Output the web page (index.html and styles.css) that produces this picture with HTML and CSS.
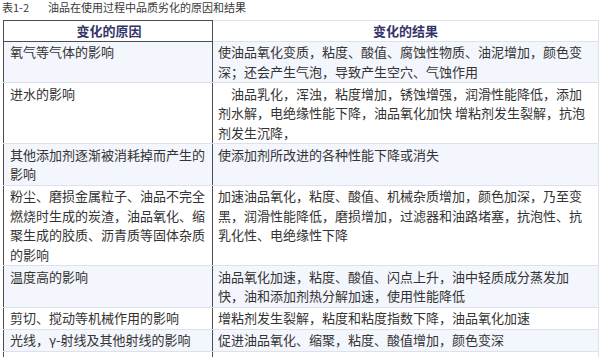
FILE: index.html
```html
<!DOCTYPE html>
<html lang="zh">
<head>
<meta charset="utf-8">
<link rel="stylesheet" href="styles.css">
</head>
<body>
<div class="caption"><span class="num">表1-2</span><span>油品在使用过程中品质劣化的原因和结果</span></div>
<table class="grid">
  <colgroup><col class="c1"><col class="c2"></colgroup>
  <thead>
    <tr><th class="cause">变化的原因</th><th class="result">变化的结果</th></tr>
  </thead>
  <tbody>
    <tr class="alt"><td class="cause">氧气等气体的影响</td><td>使油品氧化变质，粘度、酸值、腐蚀性物质、油泥增加，颜色变深；还会产生气泡，导致产生空穴、气蚀作用</td></tr>
    <tr><td class="cause">进水的影响</td><td class="indent">油品乳化，浑浊，粘度增加，锈蚀增强，润滑性能降低，添加剂水解，电绝缘性能下降，油品氧化加快 增粘剂发生裂解，抗泡剂发生沉降，</td></tr>
    <tr class="alt"><td class="cause">其他添加剂逐渐被消耗掉而产生的影响</td><td>使添加剂所改进的各种性能下降或消失</td></tr>
    <tr><td class="cause">粉尘、磨损金属粒子、油品不完全燃烧时生成的炭渣，油品氧化、缩聚生成的胶质、沥青质等固体杂质的影响</td><td>加速油品氧化，粘度、酸值、机械杂质增加，颜色加深，乃至变黑，润滑性能降低，磨损增加，过滤器和油路堵塞，抗泡性、抗乳化性、电绝缘性下降</td></tr>
    <tr class="alt"><td class="cause">温度高的影响</td><td>油品氧化加速，粘度、酸值、闪点上升，油中轻质成分蒸发加快，油和添加剂热分解加速，使用性能降低</td></tr>
    <tr><td class="cause">剪切、搅动等机械作用的影响</td><td>增粘剂发生裂解，粘度和粘度指数下降，油品氧化加速</td></tr>
    <tr class="alt"><td class="cause">光线，γ-射线及其他射线的影响</td><td>促进油品氧化、缩聚，粘度、酸值增加，颜色变深</td></tr>
    <tr class="tail"><td class="cause"></td><td></td></tr>
  </tbody>
</table>
</body>
</html>
```

FILE: styles.css
```css
html, body {
  overflow: hidden;
}
body {
  margin: 0;
  padding: 0 2px 0 3px;
  background: #ffffff;
  font-family: "Noto Sans CJK SC", "Noto Sans", sans-serif;
  color: #333333;
}
.caption {
  height: 19px;
  padding-top: 1px;
  font-size: 11px;
  line-height: 13px;
  color: #3a3a3a;
  margin-left: -1px;
}
.caption .num {
  display: inline-block;
  width: 46px;
}
.grid {
  width: 595px;
  table-layout: fixed;
  border-collapse: collapse;
  font-size: 13px;
  line-height: 19.5px;
}
.c1 { width: 209px; }
.c2 { width: 386px; }
.grid th,
.grid td {
  border: 1px solid #dde2ea;
  padding: 0.75px 5px 0.75px 5px;
  vertical-align: top;
  text-align: left;
  word-break: break-all;
}
.grid th {
  text-align: center;
  vertical-align: middle;
  font-weight: bold;
  color: #34346a;
  padding-top: 0;
  padding-bottom: 0;
  height: 19px;
}
.grid .cause {
  border-left: 1px solid #4d4d4d;
  border-right: 1px solid #4d4d4d;
  padding-left: 6px;
  padding-right: 4px;
}
.grid th.cause {
  border-top: 1px solid #4d4d4d;
  border-bottom: 1px solid #4d4d4d;
}
.grid tr.alt td {
  background: #f3f6fc;
}
.grid td.indent {
  text-indent: 1em;
}
.grid tr.tail td {
  height: 20px;
}
```
